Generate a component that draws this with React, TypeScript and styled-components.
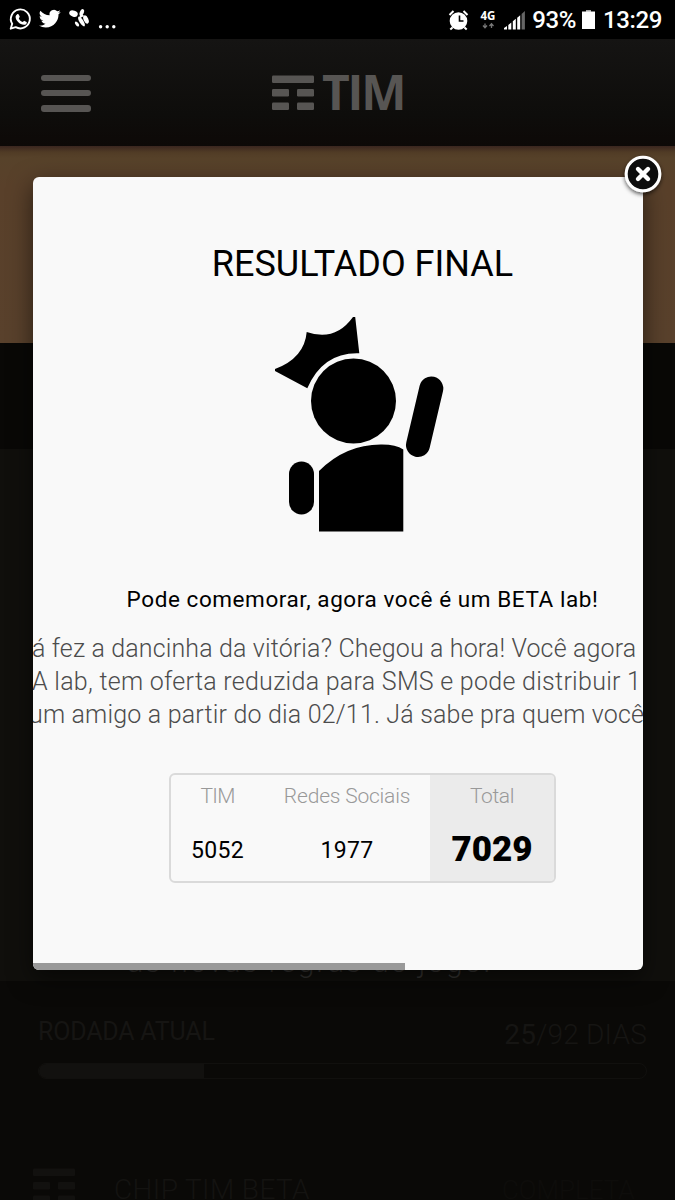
import React from 'react';
import styled, { createGlobalStyle } from 'styled-components';

const GlobalStyle = createGlobalStyle`
  *, *::before, *::after { box-sizing: border-box; }
  body { margin: 0; background: #0a0907; font-family: Roboto, "Liberation Sans", sans-serif; }
`;

const Screen = styled.div`
  position: relative;
  display: flex;
  flex-direction: column;
  width: 675px;
  height: 1200px;
  overflow: hidden;
  background: #0a0907;
`;

const StatusBar = styled.div`
  display: flex;
  justify-content: space-between;
  flex: none;
  height: 39px;
  background: #000;
`;

const TextLine = styled.span<{ $size: number; $spacing?: number; $weight?: number; $color?: string }>`
  display: block;
  white-space: nowrap;
  font-size: ${p => p.$size}px;
  letter-spacing: ${p => p.$spacing ?? 0}px;
  font-weight: ${p => p.$weight ?? 400};
  color: ${p => p.$color ?? '#000'};
`;

const StatusRight = styled.div`
  display: flex;
  align-items: center;
  padding-right: 12px;
  height: 40px;
`;

const Battery = styled.svg`
  margin-left: 6px;
`;

const Clock = styled(TextLine)`
  width: 60px;
  margin-left: 8px;
`;

const Header = styled.header`
  display: flex;
  flex: none;
  align-items: flex-start;
  height: 107px;
  padding: 36px 0 0 41px;
  background: linear-gradient(#151413, #0e0d0b 70%, #0d0907);
`;

const MenuButton = styled.div`
  display: flex;
  flex-direction: column;
  gap: 9px;
  width: 49.5px;
`;

const MenuBar = styled.i`
  height: 6.2px;
  border-radius: 3px;
  background: #575553;
`;

const Brand = styled.div`
  display: flex;
  margin-left: 181.5px;
`;

const BrandName = styled.span`
  margin: -11px 0 0 8px;
  font: 700 48px/56px "Open Sans", sans-serif;
  letter-spacing: -2.2px;
  color: #575553;
`;

const Banner = styled.div`
  flex: none;
  height: 197px;
  background: linear-gradient(#3a261f 0, #503b25 6px, #57422a 12px, #59402a 40px, #59412c);
`;

const Strip = styled.div`
  flex: none;
  height: 106px;
  background: #090806;
`;

const Content = styled.div`
  display: flex;
  align-items: flex-end;
  flex: none;
  height: 532px;
  padding: 0 0 2px 127px;
  background: #100f0c;
`;

const Round = styled.section`
  display: flex;
  flex-direction: column;
  height: 219px;
  padding: 33px 28px 0 38px;
`;

const RoundHead = styled.div`
  display: flex;
  flex: none;
  justify-content: space-between;
  height: 49px;
  line-height: 36px;
`;

const DayCount = styled(TextLine)`
  padding-top: 3px;
`;

const Track = styled.div`
  flex: none;
  height: 16px;
  border: 1px solid #11100e;
  border-radius: 8px;
  overflow: hidden;
`;

const Progress = styled.div`
  width: 165px;
  height: 100%;
  background: #12110f;
`;

const ChipRow = styled.div`
  display: flex;
  margin: 89px 0 0 -5px;
`;

const ChipName = styled(TextLine)`
  margin: 4px 0 0 39px;
  line-height: 36px;
`;

const ChipValue = styled(TextLine)`
  margin: 4px 0 0 192px;
  line-height: 36px;
`;

const Overlay = styled.div`
  position: absolute;
  inset: 0;
  padding: 177px 32px 0 33px;
`;

const Modal = styled.div`
  position: relative;
  width: 610px;
  height: 793px;
`;

const Sheet = styled.div`
  display: flex;
  flex-direction: column;
  height: 100%;
  border-radius: 6px;
  overflow: hidden;
  background: #f9f9f9;
`;

const Shade = styled.div`
  height: 100%;
  border-radius: 6px;
  box-shadow: 0 8px 24px rgba(0, 0, 0, 0.55);
`;

const Body = styled.div`
  display: flex;
  flex-direction: column;
  align-items: center;
  flex: 1;
  width: 659px;
  padding-top: 65px;
`;

const Title = styled(TextLine)`
  line-height: 44px;
`;

const Figure = styled.svg`
  flex: none;
  margin: 29px 0 0 -5px;
`;

const Subtitle = styled(TextLine)`
  margin-top: 51px;
  line-height: 30px;
`;

const Paragraph = styled.div`
  align-self: stretch;
  margin-top: 18px;
`;

const ParagraphLine = styled(TextLine)<{ $shift: number }>`
  margin-left: ${p => p.$shift}px;
  line-height: 33px;
`;

const Score = styled.div`
  display: flex;
  align-self: flex-start;
  width: 387px;
  height: 110px;
  margin: 42px 0 0 136px;
  border: 2px solid #dadada;
  border-radius: 6px;
  overflow: hidden;
`;

const ScoreCell = styled.div<{ $width: number; $total?: boolean }>`
  display: flex;
  flex-direction: column;
  align-items: center;
  width: ${p => p.$width}px;
  padding-top: 5px;
  background: ${p => (p.$total ? '#ebebeb' : 'transparent')};
`;

const ScoreLabel = styled(TextLine)`
  line-height: 32px;
`;

const ScoreValue = styled(TextLine)<{ $gap?: number }>`
  margin-top: ${p => p.$gap ?? 17}px;
  line-height: 44px;
`;

const Scrollbar = styled.div`
  width: 372px;
  height: 7px;
  background: #999;
`;

const Close = styled.svg`
  position: absolute;
  top: -27px;
  right: -24px;
`;

const Logo = ({ color }: { color: string }) => (
  <svg width="42" height="36" viewBox="0 0 42 36" fill={color}>
    <rect x="0" y="0.5" width="42" height="7.5" rx="1.2" />
    <rect x="0" y="14" width="17" height="7.5" rx="1.2" />
    <rect x="25" y="14" width="17" height="7.5" rx="1.2" />
    <rect x="0" y="27.5" width="17" height="7.5" rx="1.2" />
    <rect x="25" y="27.5" width="17" height="7.5" rx="1.2" />
  </svg>
);

const NotificationIcons = () => (
  <svg width="120" height="39" viewBox="0 0 120 39" fill="#fff">
    <path d="M10.700 28.700l1.500-4.900a9.500 9.500 0 1 1 3.500 3.400z" fill="none" stroke="#fff" strokeWidth="1.900" strokeLinejoin="round" />
    <path d="M17 14.4c.6-.6 1.4-.5 1.7.1l1 2.1c.2.500-.700 1.400-.900 1.800.900 1.800 2.100 2.900 4 3.700.500-.300 1.200-1.500 1.700-1.200l2 1c1 .500-.300 2.400-1.300 2.800-4.300 1.200-9.900-4.200-9.600-7.900 0-.900.700-1.900 1.400-2.400z" />
    <path transform="translate(38.900 7.800) scale(.91)" d="M23.953 4.570a10 10 0 0 1-2.825.775 4.958 4.958 0 0 0 2.163-2.723 9.900 9.900 0 0 1-3.127 1.184 4.920 4.920 0 0 0-8.384 4.482C7.690 8.095 4.067 6.130 1.640 3.162a4.920 4.920 0 0 0 1.523 6.574 4.900 4.900 0 0 1-2.229-.616v.061a4.923 4.923 0 0 0 3.946 4.827 4.996 4.996 0 0 1-2.212.085 4.937 4.937 0 0 0 4.604 3.417 9.868 9.868 0 0 1-6.102 2.105c-.39 0-.779-.023-1.170-.067a13.995 13.995 0 0 0 7.557 2.209c9.054 0 13.999-7.496 13.999-13.986 0-.209 0-.42-.015-.63a9.936 9.936 0 0 0 2.460-2.548z" />
    <ellipse cx="73.500" cy="13.600" rx="4.400" ry="3" transform="rotate(20 73.500 13.600)" />
    <ellipse cx="81.800" cy="12.500" rx="2" ry="3.500" transform="rotate(22 81.800 12.500)" />
    <ellipse cx="86" cy="19.500" rx="2.300" ry="4.400" transform="rotate(-24 86 19.500)" />
    <ellipse cx="81.500" cy="21.500" rx="2" ry="5.600" transform="rotate(-32 81.500 21.500)" />
    <ellipse cx="77" cy="24" rx="1.500" ry="2.900" transform="rotate(-38 77 24)" />
    <path d="M79.500 16a2.400 2.400 0 0 1 4.500 0l-4 2.200z" />
    <circle cx="100.600" cy="26.700" r="1.700" /><circle cx="107.200" cy="26.700" r="1.700" /><circle cx="113.800" cy="26.700" r="1.700" />
  </svg>
);

const SignalIcons = () => (
  <svg width="84" height="39" viewBox="0 0 84 39" fill="#fff">
    <circle cx="10.500" cy="20" r="8.800" />
    <path d="M11.500 14.500V20h4" fill="none" stroke="#000" strokeWidth="1.600" />
    <path d="M1.500 14l4-4M19.500 14l-4-4M4.500 26.500l-2.200 2M16.500 26.500l2.200 2" stroke="#fff" strokeWidth="2" />
    <text x="32.500" y="18.500" fontSize="11.500" fontWeight="700" fontFamily="Noto Sans, sans-serif">4G</text>
    <path d="M37 22.500v4M35 24.500l2 2.300 2-2.300M43.500 27v-4M41.500 25l2-2.300 2 2.300" stroke="#777" strokeWidth="1.300" fill="none" />
    <path d="M56 28.500v-1.500l3-2v3.500zM60.300 28.500V24l3-2.500v7zM64.800 28.500v-8.300l3-2.500v10.800zM69.200 28.500V16.800l3-2.500v14.200z" />
    <path d="M73.600 28.500V13l3.300-3v18.500z" fill="#666" />
  </svg>
);

export default function App() {
  return (
    <>
      <GlobalStyle />
      <Screen>
        <StatusBar>
          <NotificationIcons />
          <StatusRight>
            <SignalIcons />
            <TextLine $size={24} $weight={500} $color="#fff" $spacing={-0.4}>93%</TextLine>
            <Battery width="13" height="40" viewBox="0 0 13 40">
              <path d="M4 10h5v3H4z" fill="#aaa" />
              <path d="M0 11.500h13V29H0z" fill="#fff" />
            </Battery>
            <Clock $size={24} $weight={500} $color="#fff" $spacing={-0.4}>13:29</Clock>
          </StatusRight>
        </StatusBar>
        <Header>
          <MenuButton><MenuBar /><MenuBar /><MenuBar /></MenuButton>
          <Brand>
            <Logo color="#575553" />
            <BrandName>TIM</BrandName>
          </Brand>
        </Header>
        <Banner />
        <Strip />
        <Content>
          <TextLine $size={30} $color="#343331" $spacing={1.9} $weight={300}>as novas regras do jogo!</TextLine>
        </Content>
        <Round>
          <RoundHead>
            <TextLine $size={25} $color="#161513" $spacing={-0.2}>RODADA ATUAL</TextLine>
            <DayCount $size={28} $color="#161513" $weight={300} $spacing={0.2}><b>25</b>/92 DIAS</DayCount>
          </RoundHead>
          <Track><Progress /></Track>
          <ChipRow>
            <Logo color="#12110f" />
            <ChipName $size={28} $color="#141311" $weight={300} $spacing={0.4}>CHIP TIM BETA</ChipName>
            <ChipValue $size={26} $color="#0e0d0b" $weight={300}>COMPLETA</ChipValue>
          </ChipRow>
        </Round>
        <Overlay>
          <Modal>
            <Shade>
              <Sheet>
                <Body>
                  <Title $size={36}>RESULTADO FINAL</Title>
                  <Figure width="172" height="218" viewBox="274 315 172 218">
                    <path d="M275 369Q304.500 358 306.700 332Q335 342 353 317H355.200L359.300 353.300Q323 352 307.300 388.300L275 371Z" />
                    <circle cx="353.500" cy="401" r="42.500" />
                    <path d="M319 531.500V471Q346 444 382 444.500Q396 444.500 403.300 449.500V531.500Z" />
                    <rect x="289" y="461.500" width="25" height="53" rx="12.500" />
                    <path d="M431.300 388.500L418 445" stroke="#000" strokeWidth="24" strokeLinecap="round" />
                  </Figure>
                  <Subtitle $size={22.5} $spacing={0.57}>Pode comemorar, agora você é um BETA lab!</Subtitle>
                  <Paragraph>
                    <ParagraphLine $size={25} $weight={300} $color="#4c4c4c" $spacing={0.14} $shift={-15}>Já fez a dancinha da vitória? Chegou a hora! Você agora</ParagraphLine>
                    <ParagraphLine $size={25} $weight={300} $color="#4c4c4c" $spacing={0.28} $shift={-1}>A lab, tem oferta reduzida para SMS e pode distribuir 1</ParagraphLine>
                    <ParagraphLine $size={25} $weight={300} $color="#4c4c4c" $spacing={0.18} $shift={-4}>um amigo a partir do dia 02/11. Já sabe pra quem você</ParagraphLine>
                  </Paragraph>
                  <Score>
                    <ScoreCell $width={93}>
                      <ScoreLabel $size={21} $weight={300} $color="#999" $spacing={-0.7}>TIM</ScoreLabel>
                      <ScoreValue $size={23} $spacing={0.3}>5052</ScoreValue>
                    </ScoreCell>
                    <ScoreCell $width={166}>
                      <ScoreLabel $size={21} $weight={300} $color="#999" $spacing={-0.2}>Redes Sociais</ScoreLabel>
                      <ScoreValue $size={23} $spacing={0.3}>1977</ScoreValue>
                    </ScoreCell>
                    <ScoreCell $width={124} $total>
                      <ScoreLabel $size={21} $weight={300} $color="#999" $spacing={-0.4}>Total</ScoreLabel>
                      <ScoreValue $size={35} $weight={900} $gap={16}>7029</ScoreValue>
                    </ScoreCell>
                  </Score>
                </Body>
                <Scrollbar />
              </Sheet>
            </Shade>
            <Close width="48" height="50" viewBox="0 0 48 50">
              <defs>
                <filter id="closeShadow" x="-20%" y="-20%" width="140%" height="150%">
                  <feDropShadow dx="0" dy="2" stdDeviation="2" floodOpacity="0.65" />
                </filter>
              </defs>
              <circle cx="24" cy="24" r="16.800" fill="#070707" stroke="#fff" strokeWidth="3" filter="url(#closeShadow)" />
              <path d="M19 19l10 10M29 19l-10 10" stroke="#fff" strokeWidth="4.400" strokeLinecap="round" />
            </Close>
          </Modal>
        </Overlay>
      </Screen>
    </>
  );
}
